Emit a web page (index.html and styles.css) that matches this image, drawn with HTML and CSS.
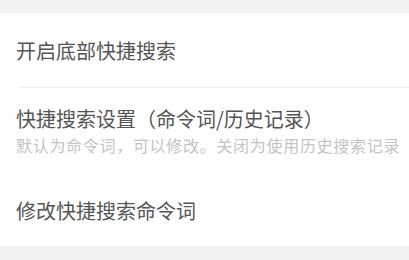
FILE: index.html
```html
<!DOCTYPE html>
<html lang="zh-CN">
<head>
<meta charset="utf-8">
<link rel="stylesheet" href="styles.css">
</head>
<body>
<div class="panel">
  <div class="item item-first">
    <div class="title">开启底部快捷搜索</div>
  </div>
  <div class="item item-second">
    <div class="title">快捷搜索设置（命令词/历史记录）</div>
    <div class="sub">默认为命令词，可以修改。关闭为使用历史搜索记录</div>
  </div>
  <div class="item item-third">
    <div class="title">修改快捷搜索命令词</div>
  </div>
</div>
</body>
</html>
```
FILE: styles.css
```css
html, body {
  margin: 0;
  padding: 0;
}
body {
  background: #f2f2f4;
  font-family: "Noto Sans CJK SC", "Noto Sans", sans-serif;
  width: 409px;
  height: 260px;
  overflow: hidden;
}
.panel {
  margin-top: 13px;
  background: #ffffff;
  height: 233px;
  display: flex;
  flex-direction: column;
}
.item {
  padding-left: 16px;
  display: flex;
  flex-direction: column;
  justify-content: center;
  box-sizing: border-box;
}
.item-first {
  height: 75px;
  background-image: linear-gradient(#efeff0, #efeff0);
  background-size: calc(100% - 20px) 1px;
  background-position: 20px 100%;
  background-repeat: no-repeat;
}
.item-second {
  height: 84px;
  justify-content: flex-start;
  padding-top: 19px;
}
.item-third {
  height: 74px;
  padding-top: 3px;
}
.title {
  font-size: 20px;
  line-height: 24px;
  color: #555555;
}
.sub {
  margin-top: 4px;
  font-size: 16px;
  letter-spacing: 0.7px;
  line-height: 20px;
  color: #c4c4c4;
  white-space: nowrap;
}
```
